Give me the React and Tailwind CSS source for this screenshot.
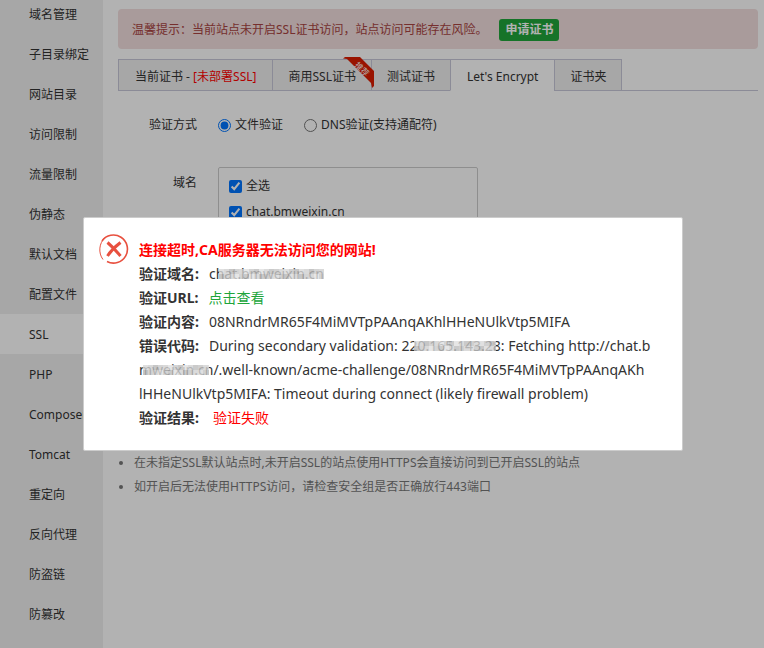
import React from 'react';

const menu = ['域名管理', '子目录绑定', '网站目录', '访问限制', '流量限制', '伪静态', '默认文档', '配置文件', 'SSL', 'PHP', 'Composer', 'Tomcat', '重定向', '反向代理', '防盗链', '防篡改'];

// greys of the mosaic cells, two rows
const mosaicTones = ['#d8d8d8', '#bdbdbd', '#cfcfcf', '#c4c4c4', '#e0e0e0', '#b8b8b8', '#d2d2d2', '#c9c9c9'];

function Mosaic({ text, left, right }) {
    return (
        <span className="relative">
            {text}
            <svg className="absolute top-[5px] h-[10px]" style={{ left, width: `calc(100% - ${left + right}px)` }} aria-hidden="true">
                {Array.from({ length: 60 }, (_, i) => (
                    <rect key={i} x={Math.floor(i / 2) * 5} y={(i % 2) * 5} width="5" height="5" fill={mosaicTones[(i * 5 + (i >> 2)) % 8]} opacity="0.8" />
                ))}
            </svg>
        </span>
    );
}

function Sidebar() {
    return (
        <nav className="w-[103px] shrink-0 bg-[#f0f0f0]">
            <ul className="-mt-1.5">
                {menu.map((item) => (
                    <li key={item}>
                        <a href="#" className={`block h-10 pl-[29px] pt-px leading-10 whitespace-nowrap ${item === 'SSL' ? 'bg-white' : ''}`}>{item}</a>
                    </li>
                ))}
            </ul>
        </nav>
    );
}

function Ribbon() {
    return (
        <svg className="absolute -top-[4px] -right-[4px]" width="33" height="33" viewBox="0 0 33 33">
            <path d="M1 2.5 3 1H18L32 15V30L30 32 29 27 5 3Z" fill="#dc1c00" />
            <text x="20" y="16" fontSize="8" fill="#fff" textAnchor="middle" transform="rotate(45 20 13)">推荐</text>
        </svg>
    );
}

function Tabs() {
    const tab = 'relative h-8 pt-1 border border-[#c8c8d8] -mr-px whitespace-nowrap';
    return (
        <div className="mt-2.5 flex border-b border-[#c8c8d8] h-8" role="tablist">
            <button role="tab" className={`${tab} px-4 bg-[#f0f0f0]`}>当前证书 - <span className="text-[red]">[未部署SSL]</span></button>
            <button role="tab" className={`${tab} px-[15px] z-10 bg-[#f0f0f0]`}>商用SSL证书<Ribbon /></button>
            <button role="tab" className={`${tab} px-[15px] bg-[#f0f0f0]`}>测试证书</button>
            <button role="tab" aria-selected="true" className={`${tab} px-4 bg-white border-b-white`}>Let's Encrypt</button>
            <button role="tab" className={`${tab} px-[15px] bg-[#f0f0f0]`}>证书夹</button>
        </div>
    );
}

function CertForm() {
    return (
        <form>
            <div className="mt-[22px] flex h-6 items-center">
                <span className="w-[79px] text-right">验证方式</span>
                <label className="ml-[21px] flex items-center gap-1">
                    <input type="radio" name="check" defaultChecked className="size-[13px]" />
                    文件验证
                </label>
                <label className="ml-[21px] flex items-center gap-1">
                    <input type="radio" name="check" className="size-[13px]" />
                    DNS验证(支持通配符)
                </label>
            </div>
            <div className="mt-[30px] flex">
                <span className="w-[79px] pt-1 text-right leading-6">域名</span>
                <div className="ml-[21px] h-[210px] w-[260px] rounded-xs border border-[#ccc] px-2.5 pt-[5px]">
                    <label className="flex h-[26px] items-center gap-1">
                        <input type="checkbox" defaultChecked className="size-[13px]" />
                        全选
                    </label>
                    <label className="flex h-[26px] items-center gap-1">
                        <input type="checkbox" defaultChecked className="size-[13px]" />
                        chat.bmweixin.cn
                    </label>
                </div>
            </div>
        </form>
    );
}

function ErrorIcon() {
    return (
        <svg className="shrink-0" width="32" height="32" viewBox="0 0 32 32" fill="none" stroke="#e8503f">
            <path d="M3 8A14 14 0 1 1 8 28.500" strokeWidth="1.6" />
            <path d="M4 26.500C-1 20 0 10 6 4.500" strokeWidth="1" />
            <path d="M8.500 9.500Q15 15 21.500 23M21.500 9.500Q13 16 8.500 23" strokeWidth="3" />
        </svg>
    );
}

function ErrorDialog() {
    return (
        <div className="fixed inset-0 z-20 flex items-start justify-center bg-black/30 pt-[217px] pr-3.5 pl-4">
            <div role="dialog" className="flex w-[600px] gap-2 rounded-xs border border-[#ccc] bg-white px-[15px] pt-5 pb-5 text-sm leading-6">
                <div className="-mt-[5px]"><ErrorIcon /></div>
                <div className="mr-[3px] flex-1 break-all">
                    <p className="font-bold text-[red]">连接超时,CA服务器无法访问您的网站!</p>
                    <p><b className="mr-2.5">验证域名:</b><Mosaic text="chat.bmweixin.cn" left={10} right={0} /></p>
                    <p><b className="mr-2.5">验证URL:</b><a href="#" className="text-[#20a53a]">点击查看</a></p>
                    <p><b className="mr-2.5">验证内容:</b>08NRndrMR65F4MiMVTpPAAnqAKhlHHeNUlkVtp5MIFA</p>
                    <p><b className="mr-2.5">错误代码:</b>During secondary validation: 2<Mosaic text="20.165.143.28" left={5} right={5} />: Fetching http://chat.b<br /><Mosaic text="mweixin.cn" left={4} right={4} />/.well-known/acme-challenge/08NRndrMR65F4MiMVTpPAAnqAKh<br />lHHeNUlkVtp5MIFA: Timeout during connect (likely firewall problem)</p>
                    <p><b className="mr-3.5">验证结果:</b><span className="text-[red]">验证失败</span></p>
                </div>
            </div>
        </div>
    );
}

export default function App() {
    return (
        <div className="flex min-h-screen bg-white font-['Noto_Sans','Noto_Sans_CJK_SC',sans-serif] text-xs text-[#333]">
            <Sidebar />
            <main className="min-w-0 flex-1 pt-[9px] pr-1.5 pl-[15px]">
                <div className="flex h-10 items-center rounded-sm bg-[#f2dede] pt-0.5 pl-3.5 text-[#a94442]">
                    温馨提示：当前站点未开启SSL证书访问，站点访问可能存在风险。
                    <button className="ml-3 h-[22px] rounded-[3px] bg-[#20a53a] px-1.5 font-bold text-white">申请证书</button>
                </div>
                <Tabs />
                <CertForm />
                <ul className="mt-[74px] list-disc pl-4 leading-6 text-[#777]">
                    <li>在未指定SSL默认站点时,未开启SSL的站点使用HTTPS会直接访问到已开启SSL的站点</li>
                    <li>如开启后无法使用HTTPS访问，请检查安全组是否正确放行443端口</li>
                </ul>
            </main>
            <ErrorDialog />
        </div>
    );
}
